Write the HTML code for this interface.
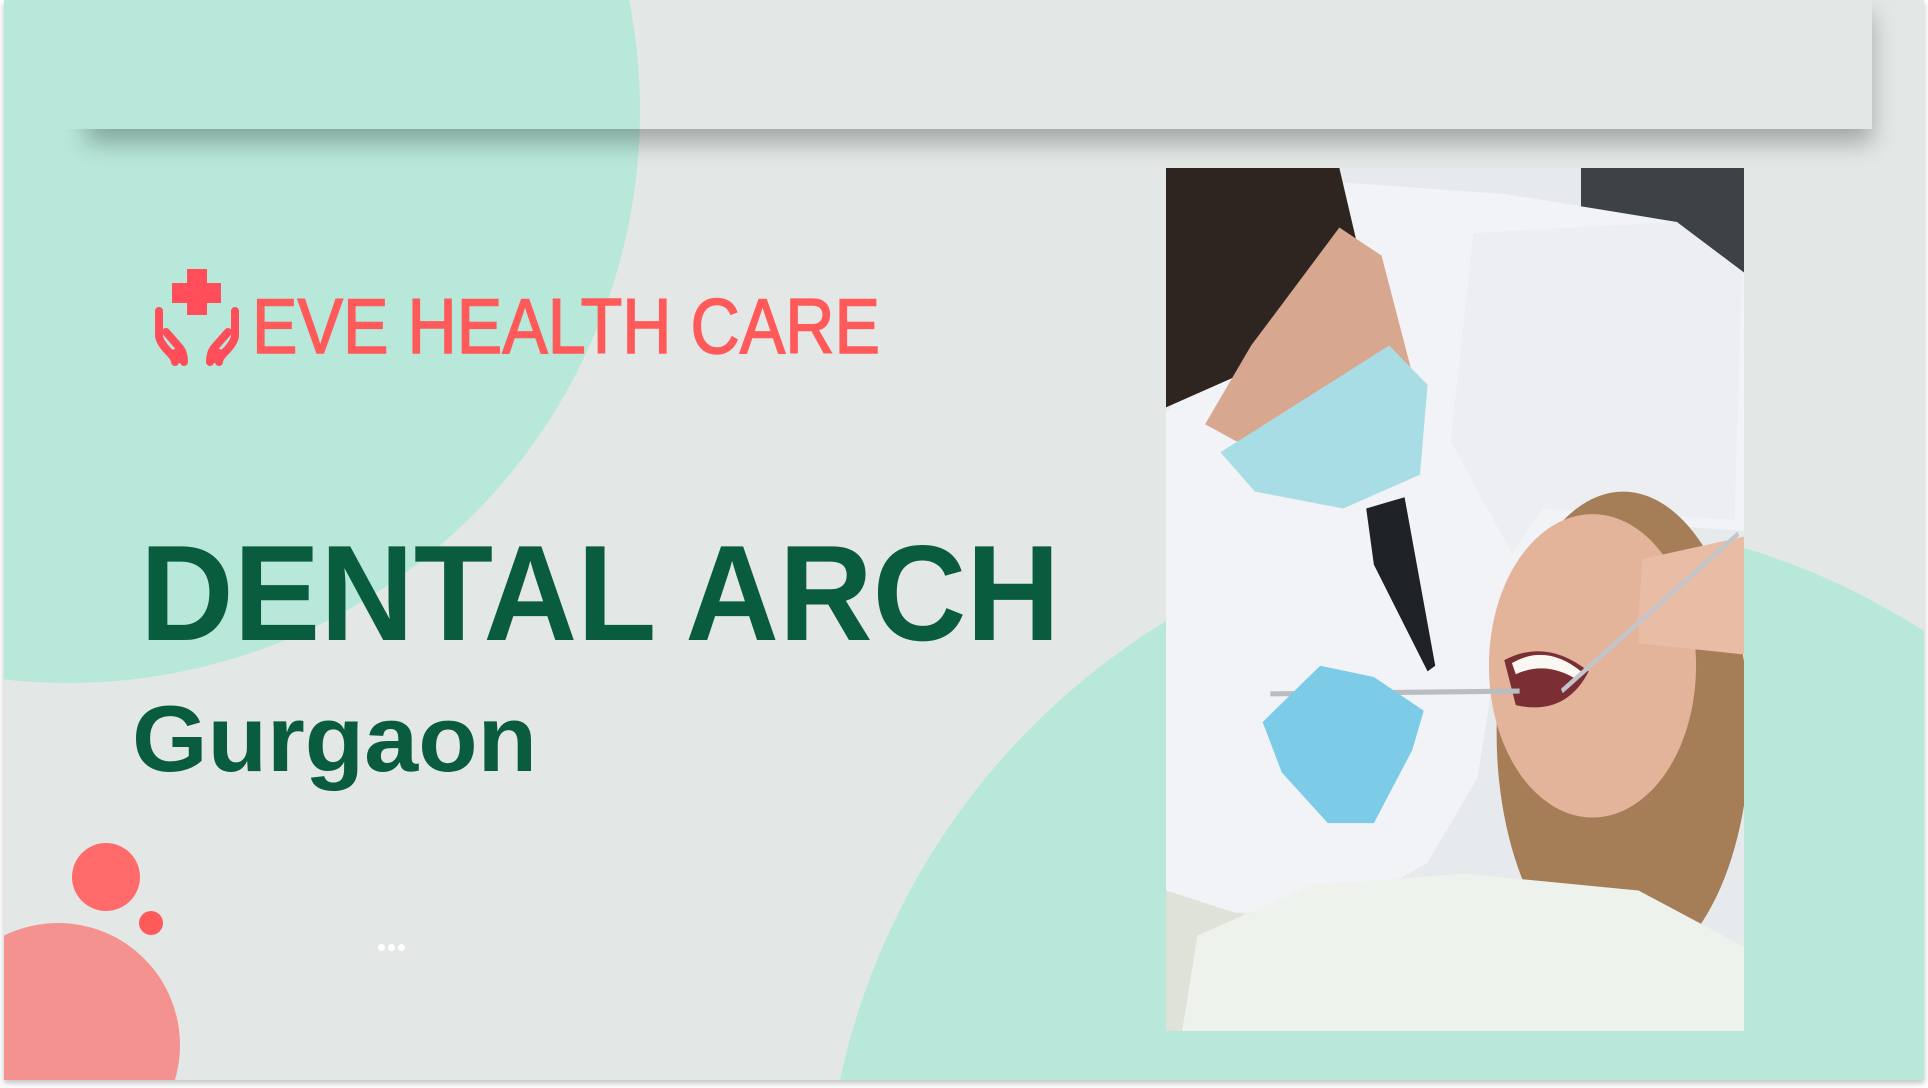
<!DOCTYPE html>
<html><head><meta charset="utf-8"><style>
html,body{margin:0;padding:0;background:#fff;overflow:hidden;width:1928px;height:1088px;}
body{position:relative;}
#slide{position:absolute;left:4px;top:0;width:1920px;height:1080px;background:#e3e8e6;overflow:hidden;box-shadow:0 3px 6px rgba(0,0,0,0.25);}
.c{position:absolute;border-radius:50%;}
#band{position:absolute;left:82px;top:0;width:1786px;height:129px;background:#e3e8e6;box-shadow:0 14px 22px rgba(0,0,0,0.28);}
</style></head><body>
<div id="slide">
  <div class="c" style="left:-508px;top:-461px;width:1144px;height:1144px;background:#b8e8da;"></div>
  <div class="c" style="left:820px;top:517px;width:1426px;height:1426px;background:#b8e8da;"></div>
  <div id="band"></div>
  <svg style="position:absolute;left:0;top:0" width="1920" height="129"><clipPath id="cc"><rect x="0" y="0" width="1920" height="129"/></clipPath><circle cx="64" cy="111" r="572" fill="#b8e8da" clip-path="url(#cc)"/></svg>
  <div class="c" style="left:-68px;top:923px;width:244px;height:244px;background:#f49290;"></div>
  <div class="c" style="left:68px;top:843px;width:68px;height:68px;background:#ff6b6b;"></div>
  <div class="c" style="left:135px;top:911px;width:24px;height:24px;background:#ff5a5a;"></div>
  <div class="c" style="left:374px;top:944px;width:7px;height:7px;background:#fff;"></div>
  <div class="c" style="left:384px;top:944px;width:7px;height:7px;background:#fff;"></div>
  <div class="c" style="left:394px;top:944px;width:7px;height:7px;background:#fff;"></div>

  <svg style="position:absolute;left:0;top:0" width="1100" height="820">
    <path d="M183 269h20v14h14v20h-14v12h-20v-12h-15v-20h15z" fill="#ff4d5a"/>
    <g fill="none" stroke="#ff4d5a" stroke-width="8" stroke-linecap="round">
      <path d="M155 311 V336 Q156 343 165 352 Q171 358 171 362"/>
      <path d="M162 332 L176 348 Q180 353 180 362"/>
      <path d="M165 352 L176 348 L180 362 L171 362 Z" fill="#ff4d5a" stroke-width="2"/>
    </g>
    <g transform="translate(386,0) scale(-1,1)" fill="none" stroke="#ff4d5a" stroke-width="8" stroke-linecap="round">
      <path d="M155 311 V336 Q156 343 165 352 Q171 358 171 362"/>
      <path d="M162 332 L176 348 Q180 353 180 362"/>
      <path d="M165 352 L176 348 L180 362 L171 362 Z" fill="#ff4d5a" stroke-width="2"/>
    </g>
    <text x="248" y="353" font-family="Liberation Sans, sans-serif" font-size="78" fill="#ff5a5a" stroke="#ff5a5a" stroke-width="1.5" textLength="628" lengthAdjust="spacingAndGlyphs">EVE HEALTH CARE</text>
    <text x="136" y="640" font-family="Liberation Sans, sans-serif" font-weight="bold" font-size="136" fill="#0a5c3f" textLength="920" lengthAdjust="spacingAndGlyphs">DENTAL ARCH</text>
    <text x="128" y="771" font-family="Liberation Sans, sans-serif" font-weight="bold" font-size="94" fill="#0a5c3f" textLength="405" lengthAdjust="spacingAndGlyphs">Gurgaon</text>
  </svg>

  <svg style="position:absolute;left:1162px;top:168px" width="578" height="863" viewBox="18 14 1507 1536" preserveAspectRatio="none">
    <rect x="18" y="14" width="1507" height="1536" fill="#e6eaec"/>
    <rect x="1100" y="14" width="425" height="200" fill="#3d4247"/>
    <rect x="18" y="1100" width="200" height="450" fill="#dfe2d8"/>
    <path d="M18 450 L480 40 L900 60 L1350 110 L1525 200 L1525 660 L1100 640 L900 800 L830 1100 L700 1250 L500 1330 L200 1340 L18 1300 Z" fill="#f1f3f6"/>
    <path d="M820 130 L1350 110 L1520 200 L1500 640 L1000 620 L920 700 L760 500 Z" fill="#eceef2"/>
    <path d="M540 620 L640 600 L720 900 L700 910 L560 720 Z" fill="#1e2226"/>
    <path d="M18 14 L470 14 L520 160 L440 290 L250 370 L18 440 Z" fill="#2e2520"/>
    <path d="M240 330 L470 120 L580 170 L660 380 L500 560 L200 500 L120 470 Z" fill="#d8a78f"/>
    <path d="M160 520 L600 330 L700 400 L680 560 L480 620 L250 590 Z" fill="#a9dde6"/>
    <ellipse cx="1210" cy="1020" rx="330" ry="430" fill="#a57d57"/>
    <ellipse cx="1130" cy="900" rx="270" ry="270" fill="#e3b39a"/>
    <path d="M900 890 Q1010 850 1120 910 Q1060 990 930 970 Z" fill="#7a2f35"/>
    <path d="M920 895 Q1010 860 1100 910 L1090 925 Q1010 890 930 915 Z" fill="#fbf7f2"/>
    <path d="M1260 710 L1525 670 L1525 880 L1250 860 L1250 810 Z" fill="#e9bca6"/>
    <path d="M290 950 L940 945" stroke="#b9bdc2" stroke-width="9"/>
    <path d="M1050 945 L1510 665" stroke="#c2c6cb" stroke-width="9"/>
    <path d="M270 1000 L420 900 L560 920 L690 980 L660 1050 L560 1180 L440 1180 L320 1090 Z" fill="#7ccbe7"/>
    <path d="M100 1380 L400 1290 L800 1270 L1250 1300 L1525 1400 L1525 1550 L60 1550 Z" fill="#eef2ec"/>
  </svg>
</div>
</body></html>
